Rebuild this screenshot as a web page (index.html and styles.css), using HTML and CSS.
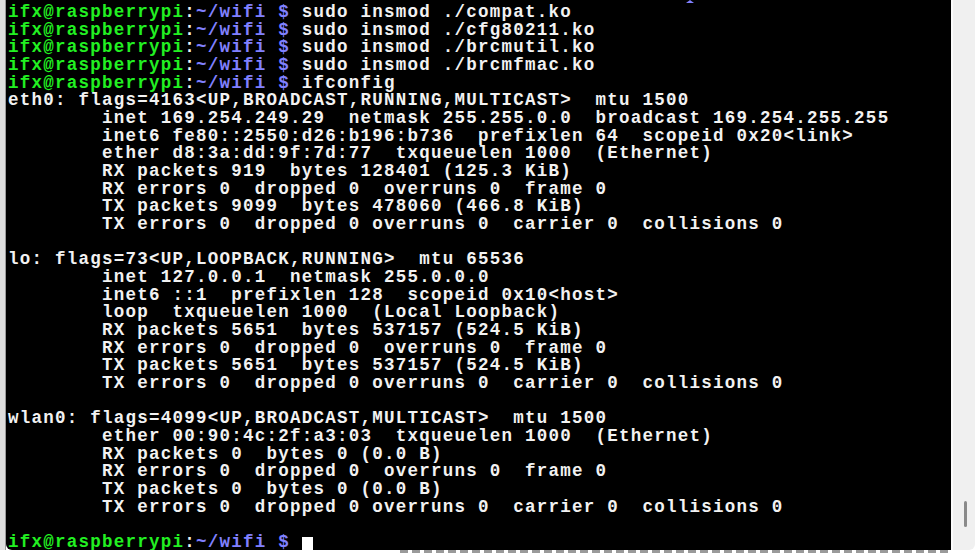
FILE: index.html
```html
<!DOCTYPE html>
<html>
<head>
<meta charset="utf-8">
<link rel="stylesheet" href="styles.css">
</head>
<body>
<div class="screen">
  <div class="edge"></div>
  <div class="term">
    <span class="frag"></span>
<pre class="out"><span class="u">ifx@raspberrypi</span>:<span class="p">~/wifi $</span> sudo insmod ./compat.ko
<span class="u">ifx@raspberrypi</span>:<span class="p">~/wifi $</span> sudo insmod ./cfg80211.ko
<span class="u">ifx@raspberrypi</span>:<span class="p">~/wifi $</span> sudo insmod ./brcmutil.ko
<span class="u">ifx@raspberrypi</span>:<span class="p">~/wifi $</span> sudo insmod ./brcmfmac.ko
<span class="u">ifx@raspberrypi</span>:<span class="p">~/wifi $</span> ifconfig
eth0: flags=4163&lt;UP,BROADCAST,RUNNING,MULTICAST&gt;  mtu 1500
        inet 169.254.249.29  netmask 255.255.0.0  broadcast 169.254.255.255
        inet6 fe80::2550:d26:b196:b736  prefixlen 64  scopeid 0x20&lt;link&gt;
        ether d8:3a:dd:9f:7d:77  txqueuelen 1000  (Ethernet)
        RX packets 919  bytes 128401 (125.3 KiB)
        RX errors 0  dropped 0  overruns 0  frame 0
        TX packets 9099  bytes 478060 (466.8 KiB)
        TX errors 0  dropped 0 overruns 0  carrier 0  collisions 0

lo: flags=73&lt;UP,LOOPBACK,RUNNING&gt;  mtu 65536
        inet 127.0.0.1  netmask 255.0.0.0
        inet6 ::1  prefixlen 128  scopeid 0x10&lt;host&gt;
        loop  txqueuelen 1000  (Local Loopback)
        RX packets 5651  bytes 537157 (524.5 KiB)
        RX errors 0  dropped 0  overruns 0  frame 0
        TX packets 5651  bytes 537157 (524.5 KiB)
        TX errors 0  dropped 0 overruns 0  carrier 0  collisions 0

wlan0: flags=4099&lt;UP,BROADCAST,MULTICAST&gt;  mtu 1500
        ether 00:90:4c:2f:a3:03  txqueuelen 1000  (Ethernet)
        RX packets 0  bytes 0 (0.0 B)
        RX errors 0  dropped 0  overruns 0  frame 0
        TX packets 0  bytes 0 (0.0 B)
        TX errors 0  dropped 0 overruns 0  carrier 0  collisions 0

<span class="u">ifx@raspberrypi</span>:<span class="p">~/wifi $</span> <span class="cursor"> </span></pre>
  </div>
  <div class="side">
    <div class="thumb"></div>
  </div>
</div>
<div class="bottom"><div class="dashes"></div></div>
</body>
</html>
```
FILE: styles.css
```css
html, body {
  margin: 0;
  padding: 0;
  background: #ffffff;
}
.screen {
  display: flex;
  height: 550px;
  width: 975px;
}
.edge {
  width: 5px;
  background: #dedede;
  border-right: 1px solid #9a9a9a;
}
.term {
  position: relative;
  width: 945px;
  background: #000000;
  border-bottom-left-radius: 6px;
  overflow: hidden;
}
.frag {
  position: absolute;
  left: 680px;
  top: 0;
  width: 0;
  height: 0;
  border-left: 4px solid transparent;
  border-right: 4px solid transparent;
  border-bottom: 3px solid #8080ff;
}
.out {
  margin: 0;
  padding: 4px 0 0 2px;
  font-family: "Liberation Mono", "DejaVu Sans Mono", monospace;
  font-weight: bold;
  font-size: 17.5px;
  letter-spacing: 1.25px;
  line-height: 17.67px;
  color: #f2f2f2;
  white-space: pre;
}
.u {
  color: #22f022;
}
.p {
  color: #8080ff;
}
.cursor {
  display: inline-block;
  width: 11px;
  height: 16px;
  background: #ffffff;
  vertical-align: -3px;
}
.side {
  flex: 1;
  background: #f0f0f0;
  border-left: 2px solid #fbfbfb;
  border-bottom-right-radius: 6px;
  display: flex;
  flex-direction: column;
  justify-content: flex-end;
  align-items: center;
  padding-bottom: 23px;
  box-sizing: border-box;
}
.thumb {
  width: 3px;
  height: 26px;
  background: #8a8a8a;
  border-radius: 2px;
  margin-left: 2px;
}
.bottom {
  height: 5px;
  display: flex;
  padding-left: 400px;
}
.dashes {
  width: 550px;
  height: 3px;
  background: repeating-linear-gradient(90deg, #9a9a9a 0 8px, transparent 8px 12px);
}
```
